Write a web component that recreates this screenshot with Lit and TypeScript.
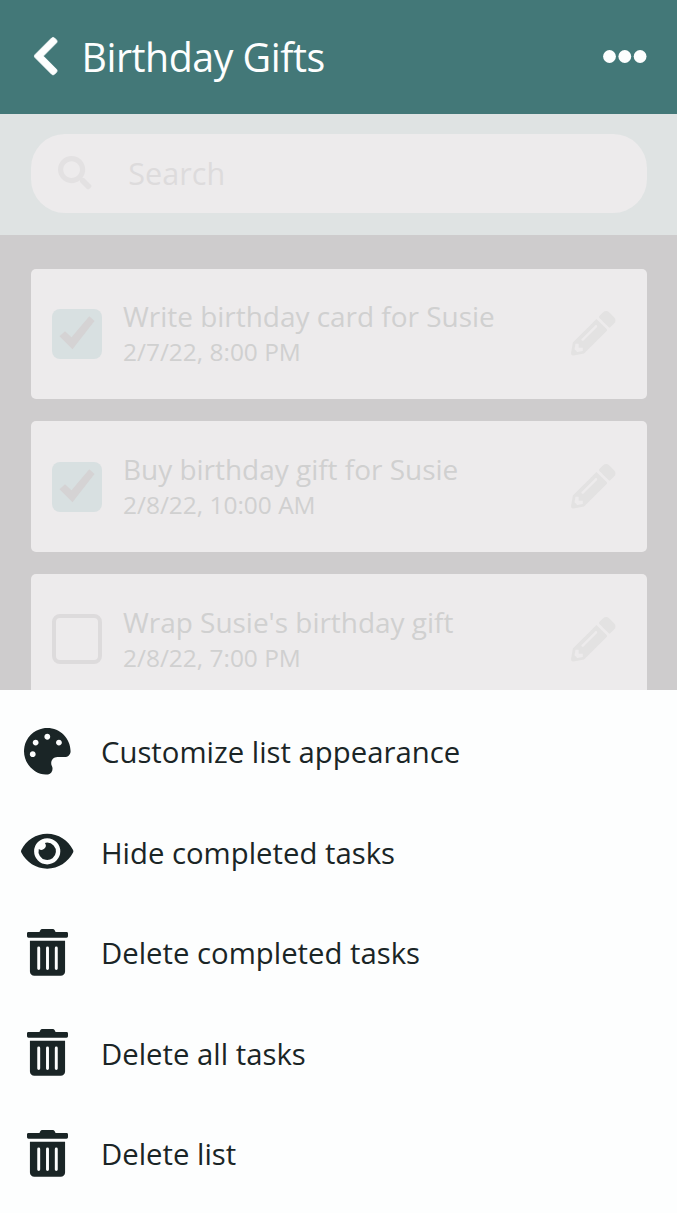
import { LitElement, html, css, svg } from "lit";
import { customElement } from "lit/decorators.js";

const PATHS = {
  palette: "M204.3 5C104.9 24.4 24.8 104.3 5.2 203.4c-37 187 131.7 326.4 258.8 306.7 41.2-6.4 61.4-54.6 42.5-91.7-23.1-45.4 9.9-98.4 60.9-98.4h79.7c35.8 0 64.8-29.6 64.9-65.3C511.5 97.1 368.1-26.9 204.3 5zM96 320c-17.7 0-32-14.3-32-32s14.3-32 32-32 32 14.3 32 32-14.3 32-32 32zm32-128c-17.7 0-32-14.3-32-32s14.3-32 32-32 32 14.3 32 32-14.3 32-32 32zm128-64c-17.7 0-32-14.3-32-32s14.3-32 32-32 32 14.3 32 32-14.3 32-32 32zm128 64c-17.7 0-32-14.3-32-32s14.3-32 32-32 32 14.3 32 32-14.3 32-32 32z",
  eye: "M572.52 241.4C518.29 135.59 410.93 64 288 64S57.68 135.64 3.48 241.41a32.35 32.35 0 0 0 0 29.19C57.71 376.41 165.07 448 288 448s230.32-71.64 284.52-177.41a32.35 32.35 0 0 0 0-29.19zM288 400a144 144 0 1 1 144-144 143.93 143.93 0 0 1-144 144zm0-240a95.31 95.31 0 0 0-25.31 3.79 47.85 47.85 0 0 1-66.9 66.9A95.78 95.78 0 1 0 288 160z",
  trash: "M32 464a48 48 0 0 0 48 48h288a48 48 0 0 0 48-48V128H32zm272-256a16 16 0 0 1 32 0v224a16 16 0 0 1-32 0zm-96 0a16 16 0 0 1 32 0v224a16 16 0 0 1-32 0zm-96 0a16 16 0 0 1 32 0v224a16 16 0 0 1-32 0zM432 32H312l-9.4-18.7A24 24 0 0 0 281.1 0H166.8a23.72 23.72 0 0 0-21.4 13.3L136 32H16A16 16 0 0 0 0 48v32a16 16 0 0 0 16 16h416a16 16 0 0 0 16-16V48a16 16 0 0 0-16-16z",
  pencil: "M497.9 142.1l-46.1 46.1c-4.7 4.7-12.3 4.7-17 0l-111-111c-4.7-4.7-4.7-12.3 0-17l46.1-46.1c18.7-18.7 49.1-18.7 67.9 0l60.1 60.1c18.8 18.7 18.8 49.1 0 67.9zM284.2 99.8L21.6 362.4.4 483.9c-2.9 16.4 11.4 30.6 27.8 27.8l121.5-21.3 262.6-262.6c4.7-4.7 4.7-12.3 0-17l-111-111c-4.8-4.7-12.4-4.7-17.1 0zM124.1 339.9c-5.5-5.5-5.5-14.3 0-19.8l154-154c5.5-5.5 14.3-5.5 19.8 0s5.5 14.3 0 19.8l-154 154c-5.5 5.5-14.3 5.5-19.8 0zM88 424h48v36.3l-64.5 11.3-31.1-31.1L51.7 376H88v48z",
  search: "M505 442.7L405.3 343c-4.5-4.5-10.6-7-17-7H372c27.6-35.3 44-79.7 44-128C416 93.1 322.9 0 208 0S0 93.1 0 208s93.1 208 208 208c48.3 0 92.7-16.4 128-44v16.3c0 6.4 2.5 12.5 7 17l99.7 99.7c9.4 9.4 24.6 9.4 33.9 0l28.3-28.3c9.4-9.4 9.4-24.6.1-34zM208 336c-70.7 0-128-57.2-128-128 0-70.7 57.2-128 128-128 70.7 0 128 57.2 128 128 0 70.7-57.2 128-128 128z",
  back: "M34.52 239.03L228.87 44.69c9.37-9.37 24.57-9.37 33.94 0l22.67 22.67c9.36 9.36 9.37 24.52.04 33.9L131.49 256l154.02 154.75c9.34 9.38 9.32 24.54-.04 33.9l-22.67 22.67c-9.37 9.37-24.57 9.37-33.94 0L34.52 272.97c-9.37-9.37-9.37-24.57 0-33.94z",
};

const BOXES: Record<string, string> = {
  palette: "0 0 512 512",
  eye: "0 0 576 512",
  trash: "0 0 448 512",
  pencil: "0 0 512 512",
  search: "0 0 512 512",
  back: "22.5 32.6 275 446.8",
};

const icon = (name: keyof typeof PATHS) => html`
  <svg class="icon ${name}" viewBox=${BOXES[name]} aria-hidden="true">${svg`<path d=${PATHS[name]}></path>`}</svg>`;

const TASKS = [
  { title: "Write birthday card for Susie", due: "2/7/22, 8:00 PM", done: true },
  { title: "Buy birthday gift for Susie", due: "2/8/22, 10:00 AM", done: true },
  { title: "Wrap Susie's birthday gift", due: "2/8/22, 7:00 PM", done: false },
];

const ACTIONS: { icon: keyof typeof PATHS; label: string }[] = [
  { icon: "palette", label: "Customize list appearance" },
  { icon: "eye", label: "Hide completed tasks" },
  { icon: "trash", label: "Delete completed tasks" },
  { icon: "trash", label: "Delete all tasks" },
  { icon: "trash", label: "Delete list" },
];

@customElement("app-root")
export class AppRoot extends LitElement {
  static styles = css`
    :host {
      display: flex;
      flex-direction: column;
      height: 1213px;
      overflow: hidden;
      background: #fdfefe;
      font-family: "Open Sans", "Noto Sans", sans-serif;
      color: #1a2526;
    }
    * { box-sizing: border-box; }
    .icon { display: block; fill: currentColor; flex: none; overflow: visible; }
    header {
      flex: none;
      height: 114px;
      display: flex;
      align-items: center;
      padding: 0 30.5px 2px 33.5px;
      background: #437878;
      color: #fdfefe;
    }
    .back { width: 23.5px; height: 38.2px; stroke: currentColor; stroke-width: 10; }
    h1 {
      flex: 1;
      margin: 0 0 0 24.5px;
      padding-top: 1px;
      font-size: 39.3px;
      line-height: 54px;
      font-weight: 400;
      letter-spacing: -0.46px;
      white-space: nowrap;
    }
    .more { display: block; width: 44px; height: 13px; fill: currentColor; }
    .searchbar {
      flex: none;
      height: 121px;
      padding: 20px 30px 0 31px;
      background: #dfe3e3;
    }
    .field {
      height: 79px;
      border-radius: 34px;
      display: flex;
      align-items: center;
      padding: 0 27px 2px;
      background: #edebec;
      color: #dddbdc;
      font-size: 30.6px;
    }
    .search { width: 33.5px; height: 33.5px; color: #e3e1e2; }
    .field span { margin-left: 36.8px; padding-top: 1px; }
    .list {
      flex: none;
      height: 455px;
      overflow: hidden;
      padding: 33.6px 30px 0 31px;
      display: flex;
      flex-direction: column;
      gap: 22.4px;
      background: #cecccd;
    }
    .card {
      flex: none;
      height: 130.4px;
      border-radius: 5px;
      display: flex;
      align-items: center;
      padding: 0 31.5px 0 20.5px;
      background: #edebec;
      color: #d0d0d0;
    }
    .box {
      flex: none;
      width: 50px;
      height: 50px;
      border-radius: 8px;
      border: 4px solid #dddbdc;
    }
    .box.done { border: none; background: #d8e0e1; }
    .box svg { display: block; width: 50px; height: 50px; fill: #d5d3d4; }
    .text { flex: 1; margin-left: 21.5px; white-space: nowrap; }
    .name { font-size: 27.95px; line-height: 37px; }
    .due { font-size: 24.45px; line-height: 34px; }
    .pencil { width: 44.5px; height: 44.5px; color: #e3e2e2; margin: 0 0.5px 0.6px 0; }
    .sheet {
      flex: 1;
      display: flex;
      flex-direction: column;
      padding: 11px 21px 0;
    }
    .action {
      flex: none;
      height: 100.5px;
      display: flex;
      align-items: center;
      font-size: 29.3px;
      gap: 27.6px;
    }
    .action span { padding-top: 1.6px; }
    .glyph { width: 52.4px; display: flex; justify-content: center; }
    .palette { width: 46.6px; height: 46.6px; }
    .eye { width: 52.4px; height: 46.6px; }
    .trash { width: 41px; height: 46.9px; }
  `;

  render() {
    return html`
      <header>
        ${icon("back")}
        <h1>Birthday Gifts</h1>
        <svg class="more" viewBox="0 0 44 13" aria-label="More">
          <circle cx="6.5" cy="6.5" r="6.4"></circle>
          <circle cx="21.8" cy="6.5" r="6.4"></circle>
          <circle cx="37.1" cy="6.5" r="6.4"></circle>
        </svg>
      </header>
      <div class="searchbar">
        <div class="field">${icon("search")}<span>Search</span></div>
      </div>
      <main class="list">
        ${TASKS.map((t) => html`
          <div class="card">
            <div class="box ${t.done ? "done" : ""}">
              ${t.done
                ? html`<svg viewBox="0 0 50 50"><path d="M7.5 27.2L13 22.2L19.5 28.3L37.3 7.2L42.5 12L20.5 40.2Z"></path></svg>`
                : ""}
            </div>
            <div class="text">
              <div class="name">${t.title}</div>
              <div class="due">${t.due}</div>
            </div>
            ${icon("pencil")}
          </div>`)}
      </main>
      <nav class="sheet">
        ${ACTIONS.map((a) => html`
          <div class="action">
            <div class="glyph">${icon(a.icon)}</div>
            <span>${a.label}</span>
          </div>`)}
      </nav>
    `;
  }
}
